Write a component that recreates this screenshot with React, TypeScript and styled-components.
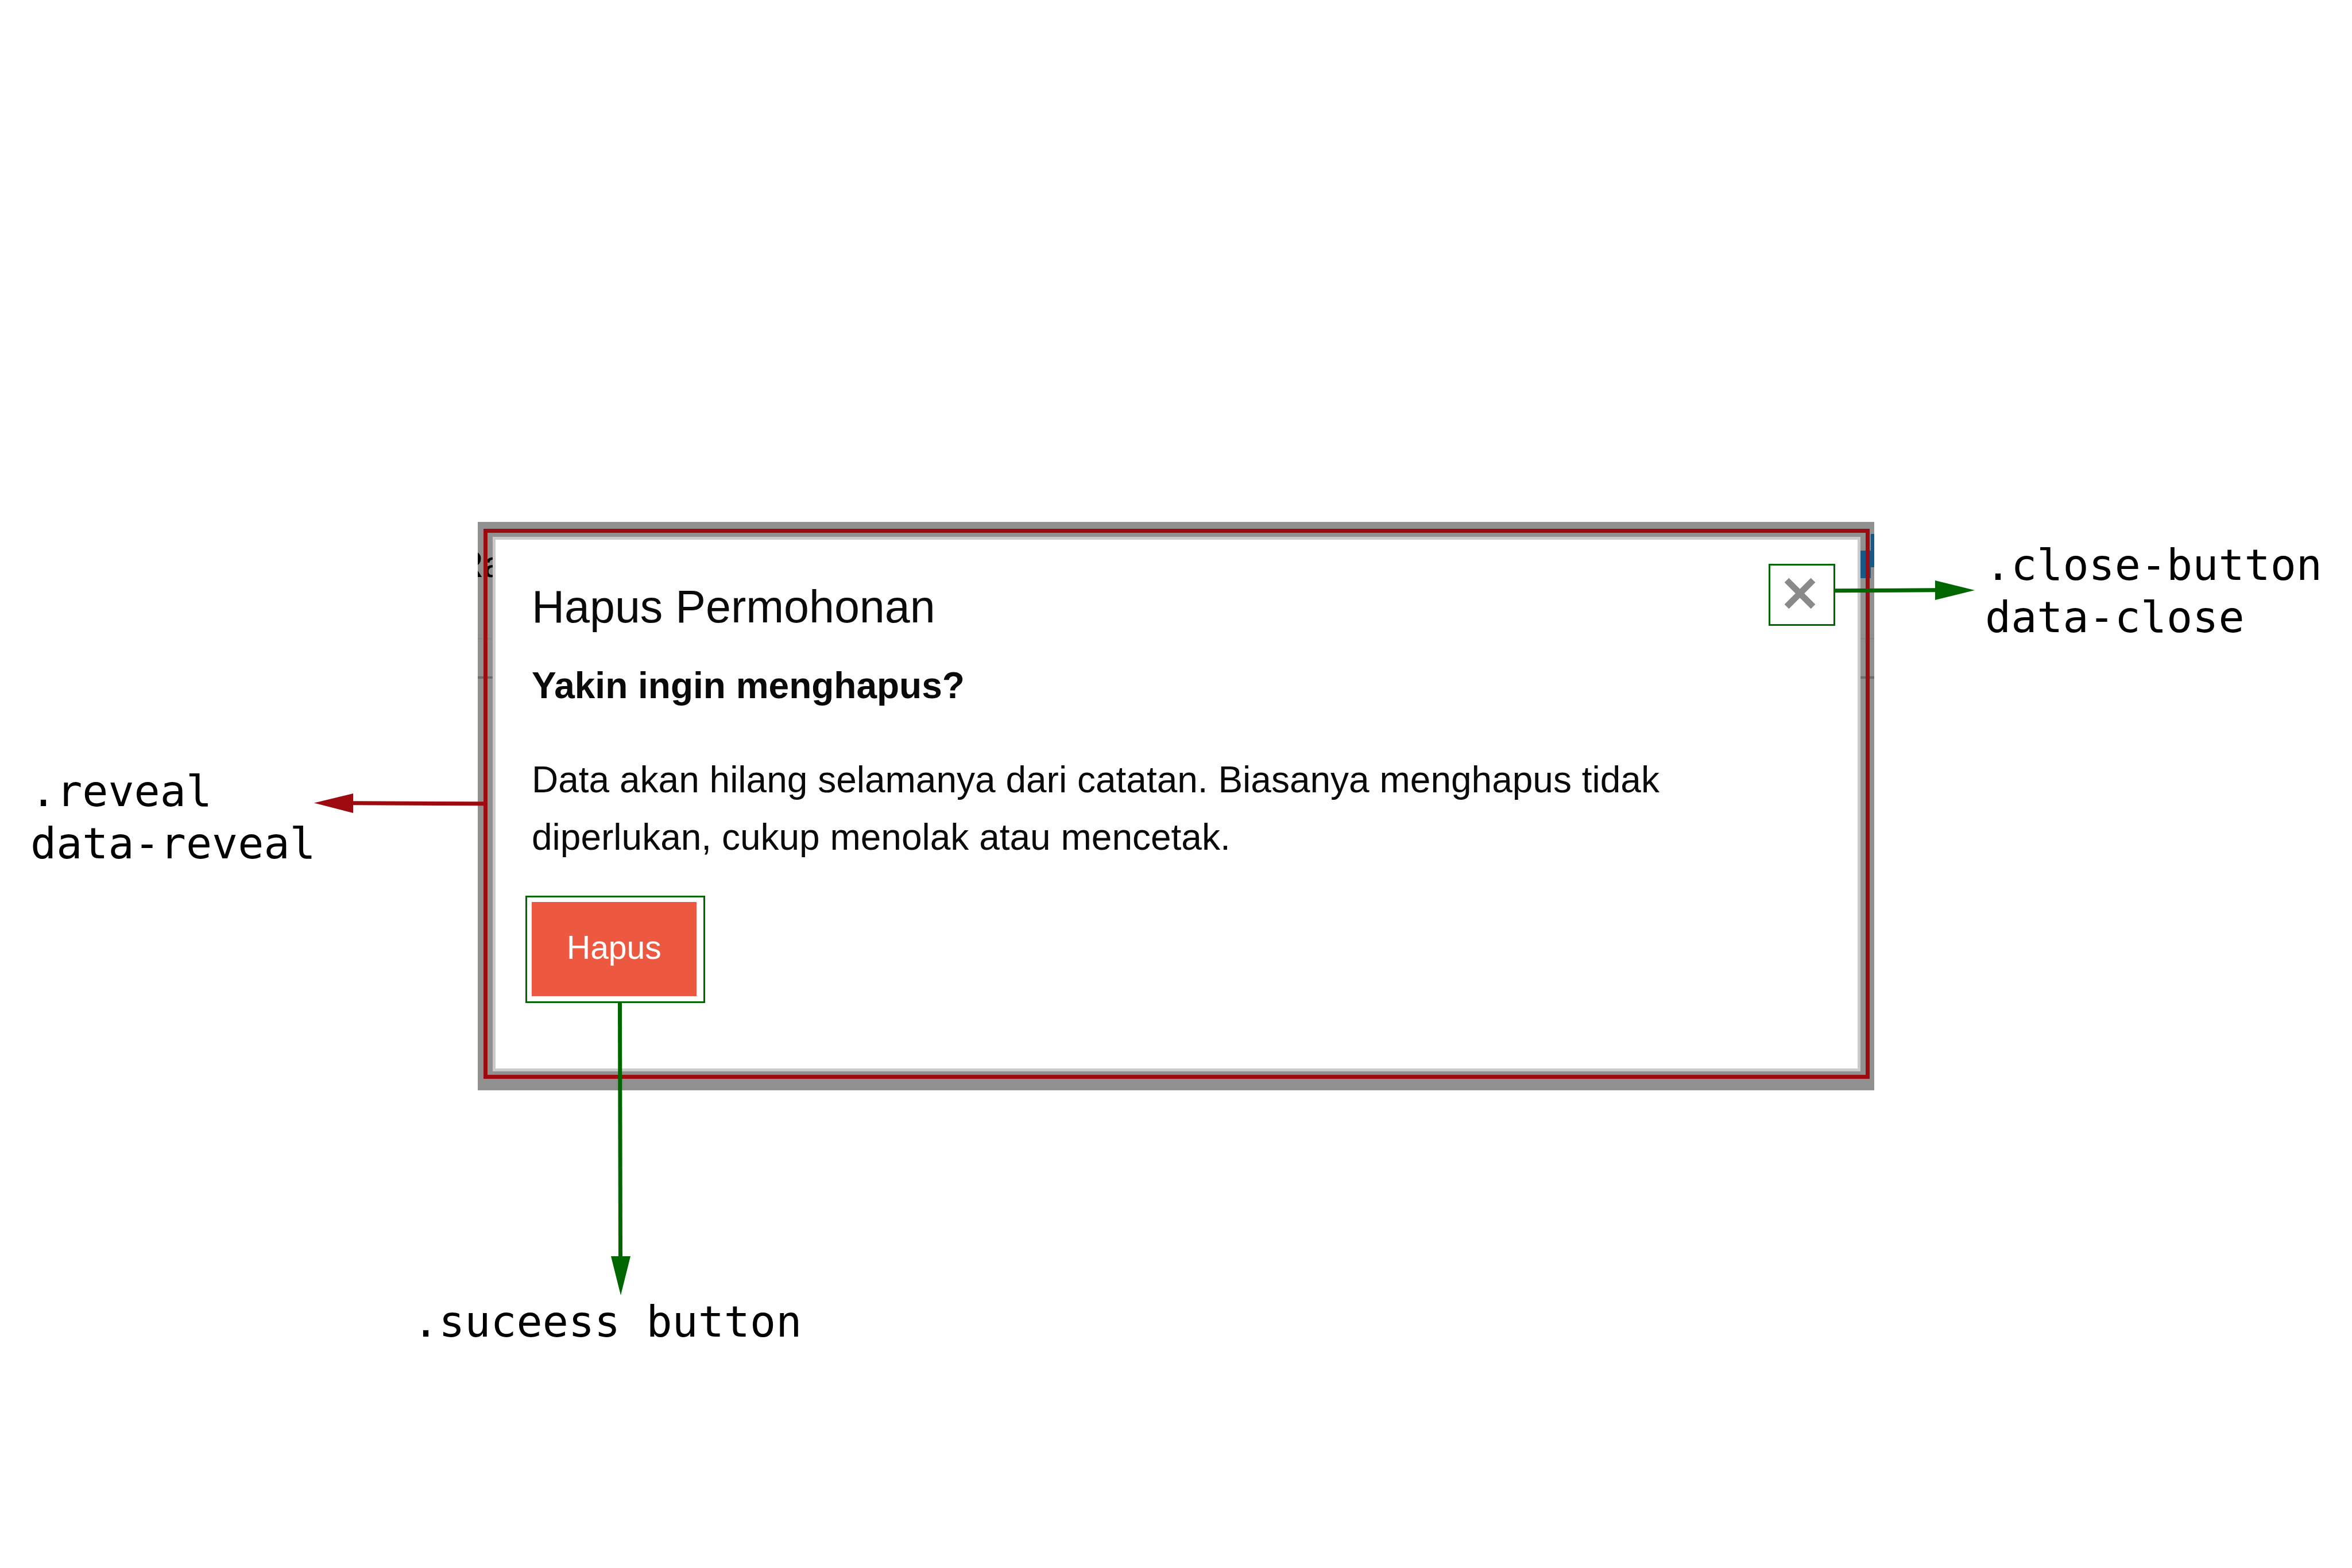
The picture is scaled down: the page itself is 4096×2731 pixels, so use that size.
import React from "react";
import styled, { createGlobalStyle } from "styled-components";

const RED = "#9d0a0f";
const GREEN = "#006600";

const GlobalStyle = createGlobalStyle`
  *, *::before, *::after { box-sizing: border-box; }
  body {
    margin: 0;
    background: #ffffff;
    color: #0a0a0a;
    font-family: "Liberation Sans", Arial, sans-serif;
  }
  h1, h2, p { margin: 0; }
`;

const Page = styled.main`
  min-height: 100vh;
  padding-top: 909px;
  overflow: hidden;
`;

const Diagram = styled.div`
  display: grid;
  grid-template-columns: 832fr 2432fr 832fr;
  align-items: start;
`;

const Note = styled.p`
  font-family: "DejaVu Sans Mono", monospace;
  font-size: 75px;
  line-height: 91px;
  color: #000000;
  white-space: pre;
`;

const RevealSide = styled.div`
  display: flex;
  align-items: center;
  z-index: 1;
  min-width: 0;
  margin-right: -10px;
  padding: 424px 0 0 53px;
`;

const RevealNote = styled(Note)`
  flex: 1 1 0;
  min-width: 0;
`;

const RevealArrow = styled.svg`
  flex: none;
  margin-bottom: 50px;
`;

const CloseSide = styled.div`
  padding: 30px 0 0 193px;
`;

const ButtonSide = styled.div`
  padding: 358px 0 0 719px;
`;

const Overlay = styled.div`
  position: relative;
  padding: 12px 8px 20px 10px;
  background: #909090;
`;

const Behind = styled.div`
  position: absolute;
  inset: 0;
  overflow: hidden;
`;

const BehindText = styled.span`
  position: absolute;
  top: 37px;
  left: -36px;
  font-size: 64px;
  line-height: 74px;
  color: #000000;
`;

const Rule = styled.span<{ $top: number; $size: number; $color: string }>`
  position: absolute;
  left: 0;
  right: 0;
  top: ${(p) => p.$top}px;
  height: ${(p) => p.$size}px;
  background: ${(p) => p.$color};
`;

const BlueBlock = styled.span<{ $top: number; $right: number; $width: number; $height: number }>`
  position: absolute;
  top: ${(p) => p.$top}px;
  right: ${(p) => p.$right}px;
  width: ${(p) => p.$width}px;
  height: ${(p) => p.$height}px;
  background: #175a87;
`;

const Outline = styled.div`
  position: relative;
  border: 7px solid ${RED};
  padding: 7px 9px 6px;
`;

const Reveal = styled.section`
  border: 5px solid #cacaca;
  padding: 62px 63px 114px;
  background: #fefefe;
`;

const Header = styled.header`
  display: flex;
  justify-content: space-between;
  align-items: flex-start;
  margin-bottom: 32px;
`;

const Title = styled.h1`
  font-size: 79px;
  font-weight: 400;
  line-height: 110px;
`;

const Lead = styled.h2`
  margin-bottom: 64px;
  font-size: 64px;
  font-weight: 700;
  line-height: 100px;
`;

const Body = styled.p`
  max-width: 2100px;
  margin-bottom: 52px;
  font-size: 64px;
  line-height: 100px;
`;

const ButtonMark = styled.div`
  position: relative;
  width: fit-content;
  margin-left: -11px;
  border: 3px solid ${GREEN};
  padding: 8px 12px 9px 8px;
`;

const DeleteButton = styled.button`
  display: block;
  border: 0;
  padding: 50px 61px 56px;
  background: #ec5840;
  color: #fefefe;
  font: 400 57px/58px "Liberation Sans", Arial, sans-serif;
  cursor: pointer;
`;

const CloseMark = styled.div`
  position: relative;
  margin: -20px -24px 0 0;
  border: 3px solid ${GREEN};
`;

const CloseButton = styled.button`
  display: block;
  border: 0;
  padding: 22px 32px 27px 25px;
  background: transparent;
  color: #8a8a8a;
  line-height: 0;
  cursor: pointer;
`;

const RightArrow = styled.svg`
  position: absolute;
  top: 26px;
  left: 100%;
`;

const DownArrow = styled.svg`
  position: absolute;
  top: 100%;
  left: 146px;
`;

export default function App() {
  return (
    <>
      <GlobalStyle />
      <Page>
        <Diagram>
          <RevealSide>
            <RevealNote>{".reveal\ndata-reveal"}</RevealNote>
            <RevealArrow width="295" height="34" viewBox="0 0 295 34" aria-hidden="true">
              <path d="M67 13.3l228 1v7l-228-1z" fill={RED} />
              <path d="M68 0v34L0 16.5z" fill={RED} />
            </RevealArrow>
          </RevealSide>

          <Overlay>
            <Behind aria-hidden="true">
              <BehindText>Ra</BehindText>
              <Rule $top={202} $size={3} $color="#8a8a8a" />
              <Rule $top={269} $size={4} $color="#6c6c6c" />
              <BlueBlock $top={50} $right={6} $width={18} $height={48} />
              <BlueBlock $top={21} $right={0} $width={6} $height={58} />
            </Behind>

            <Outline>
              <Reveal role="dialog" aria-labelledby="reveal-title">
                <Header>
                  <Title id="reveal-title">Hapus Permohonan</Title>
                  <CloseMark>
                    <CloseButton type="button" aria-label="Tutup">
                      <svg width="53" height="53" viewBox="0 0 53 53" aria-hidden="true">
                        <path
                          d="M3.5 3.5l46 46M49.5 3.5l-46 46"
                          stroke="currentColor"
                          strokeWidth="11"
                          fill="none"
                        />
                      </svg>
                    </CloseButton>
                    <RightArrow width="246" height="34" viewBox="0 0 246 34" aria-hidden="true">
                      <path d="M0 14.3l178-1v7l-178 1z" fill={GREEN} />
                      <path d="M177 0v34l69-17z" fill={GREEN} />
                    </RightArrow>
                  </CloseMark>
                </Header>
                <Lead>Yakin ingin menghapus?</Lead>
                <Body>
                  Data akan hilang selamanya dari catatan. Biasanya menghapus tidak diperlukan, cukup
                  menolak atau mencetak.
                </Body>
                <ButtonMark>
                  <DeleteButton type="button">Hapus</DeleteButton>
                  <DownArrow width="34" height="512" viewBox="0 0 34 512" aria-hidden="true">
                    <path d="M12 0h7l1 445h-7z" fill={GREEN} />
                    <path d="M0 444h34L17 512z" fill={GREEN} />
                  </DownArrow>
                </ButtonMark>
              </Reveal>
            </Outline>
          </Overlay>

          <CloseSide>
            <Note>{".close-button\ndata-close"}</Note>
          </CloseSide>
        </Diagram>
        <ButtonSide>
          <Note>.suceess button</Note>
        </ButtonSide>
      </Page>
    </>
  );
}
